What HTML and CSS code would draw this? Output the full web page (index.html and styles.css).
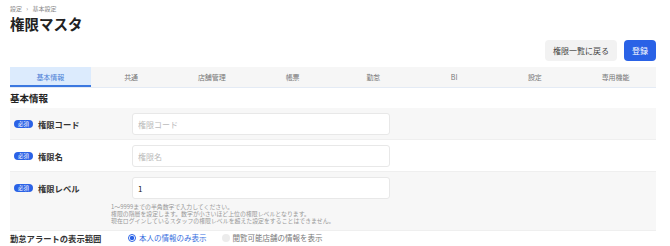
FILE: index.html
```html
<!DOCTYPE html>
<html>

<head>
    <meta charset="UTF-8">
    <title>権限マスタ</title>
    <link rel="stylesheet" href="styles.css">
</head>

<body>
    <div class="page">
        <div class="breadcrumb">設定 <span class="sep">›</span> 基本設定</div>
        <h1 class="title">権限マスタ</h1>
        <div class="actions">
            <button class="btn btn-back">権限一覧に戻る</button>
            <button class="btn btn-primary">登録</button>
        </div>
        <div class="tabs">
            <div class="tab active">基本情報</div>
            <div class="tab">共通</div>
            <div class="tab">店舗管理</div>
            <div class="tab">帳票</div>
            <div class="tab">勤怠</div>
            <div class="tab">BI</div>
            <div class="tab">設定</div>
            <div class="tab">専用機能</div>
        </div>
        <h2 class="section-title">基本情報</h2>
        <div class="form-row shaded">
            <div class="form-label"><span class="badge">必須</span>権限コード</div>
            <div class="form-field">
                <input type="text" class="text-input" placeholder="権限コード">
            </div>
        </div>
        <div class="form-row">
            <div class="form-label"><span class="badge">必須</span>権限名</div>
            <div class="form-field">
                <input type="text" class="text-input" placeholder="権限名">
            </div>
        </div>
        <div class="form-row shaded">
            <div class="form-label"><span class="badge">必須</span>権限レベル</div>
            <div class="form-field">
                <input type="text" class="text-input" value="1">
                <p class="help">1～9999までの半角数字で入力してください。<br>権限の階層を設定します。数字が小さいほど上位の権限レベルとなります。<br>現在ログインしているスタッフの権限レベルを超えた設定をすることはできません。</p>
            </div>
        </div>
        <div class="radio-row">
            <div class="radio-label">勤怠アラートの表示範囲</div>
            <label class="radio checked"><span class="dot"></span>本人の情報のみ表示</label>
            <label class="radio disabled"><span class="dot"></span>閲覧可能店舗の情報を表示</label>
        </div>
    </div>
</body>

</html>
```

FILE: styles.css
```css
body {
    margin: 0;
    font-family: "Noto Sans CJK JP", "Noto Sans", sans-serif;
    color: #222;
    background-color: #fff;
}

.page {
    padding: 0 14px 0 10px;
}

.breadcrumb {
    font-size: 6px;
    color: #888;
    padding-top: 5px;
    line-height: 8px;
}

.breadcrumb .sep {
    margin: 0 3px;
}

.title {
    margin: 2px 0 0;
    font-size: 14.5px;
    line-height: 18px;
    font-weight: bold;
}

.actions {
    display: flex;
    justify-content: flex-end;
    gap: 7px;
    margin-top: 7px;
}

.btn {
    font-family: inherit;
    font-size: 8px;
    border: none;
    border-radius: 4px;
    height: 21px;
    padding: 0 8px;
}

.btn-back {
    background-color: #f2f2f2;
    color: #444;
}

.btn-primary {
    background-color: #2a62e6;
    color: #fff;
}

.tabs {
    display: flex;
    margin-top: 6px;
    background-color: #f6f6f6;
    border-bottom: 1px solid #e4ebf5;
}

.tab {
    flex: 1;
    text-align: center;
    font-size: 7px;
    color: #777;
    height: 20px;
    line-height: 20px;
}

.tab.active {
    background-color: #dcebfd;
    color: #4a7fd6;
    box-shadow: inset 0 -2px 0 #3b78e0;
}

.section-title {
    margin: 0;
    padding: 5px 0 4px;
    font-size: 9.5px;
    line-height: 11px;
    font-weight: bold;
}

.form-row {
    display: flex;
    align-items: flex-start;
    border-bottom: 1px solid #efefef;
    padding: 5px 0 4px;
}

.form-row.shaded {
    background-color: #f7f7f7;
}

.form-label {
    width: 122px;
    display: flex;
    align-items: center;
    height: 22px;
    font-size: 8.3px;
    line-height: 12px;
    font-weight: bold;
    color: #333;
}

.form-field {
    display: flex;
    flex-direction: column;
}

.badge {
    display: inline-block;
    background-color: #2a62e6;
    color: #fff;
    font-size: 5.5px;
    font-weight: normal;
    line-height: 8px;
    height: 8px;
    padding: 0 4px;
    border-radius: 4px;
    margin: 0 5px 0 4px;
}

.text-input {
    display: block;
    box-sizing: border-box;
    width: 258px;
    height: 22px;
    margin: 0;
    border: 1px solid #e8e8e8;
    border-radius: 3px;
    background-color: #fff;
    padding: 0 5px;
    font-family: inherit;
    font-size: 8px;
    color: #222;
    outline: none;
}

.text-input::placeholder {
    color: #bbb;
}

.help {
    margin: 4px 0 2px -21px;
    font-size: 5.9px;
    line-height: 7px;
    color: #999;
}

.radio-row {
    display: flex;
    align-items: center;
    height: 10px;
    padding: 2px 0 4px;
    font-size: 7.5px;
    line-height: 10px;
}

.radio-label {
    width: 118px;
    font-weight: bold;
    font-size: 8.3px;
    color: #333;
}

.radio {
    display: flex;
    align-items: center;
    margin-right: 15px;
}

.radio .dot {
    box-sizing: border-box;
    width: 8px;
    height: 8px;
    border-radius: 50%;
    margin-right: 3px;
}

.radio.checked {
    color: #3a6fe0;
}

.radio.checked .dot {
    border: 1.3px solid #2a62e6;
    background: radial-gradient(circle, #2a62e6 0 2px, #fff 2.3px);
}

.radio.disabled {
    color: #777;
}

.radio.disabled .dot {
    background-color: #ececec;
}
```
